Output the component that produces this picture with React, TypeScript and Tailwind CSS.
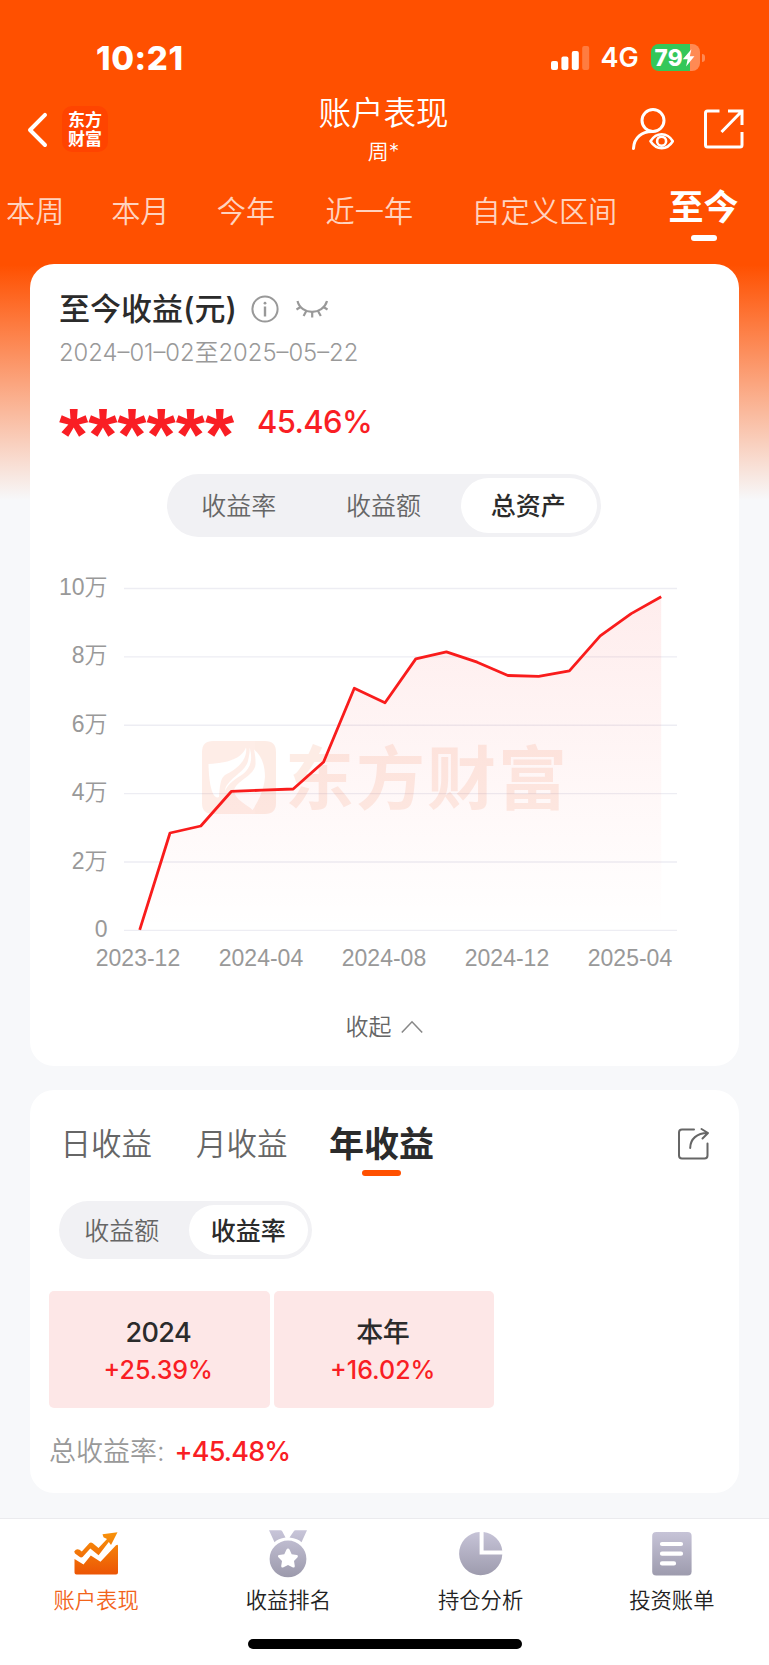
import clsx from "clsx";

const ranges = [
  { label: "本周", className: "ml-[6px]" },
  { label: "本月", className: "ml-[46.8px]" },
  { label: "今年", className: "ml-[47.3px]" },
  { label: "近一年", className: "ml-[50.3px]" },
  { label: "自定义区间", className: "ml-[58.3px]" },
];

const points = [
  [139.7, 929.8], [170, 833], [200.8, 826], [231.5, 791.3], [262.3, 790.2], [293.2, 789],
  [323.6, 762], [354.3, 688.3], [385, 702.7], [415.8, 658.9], [446.4, 651.9], [477.2, 662.2],
  [507.9, 675.5], [538.7, 676.3], [569.4, 670.8], [600.2, 635.8], [631.2, 613.6], [661.2, 596.7],
];

const gridLines = [588.5, 656.9, 725.3, 793.6, 862, 930.4];
const yLabels = ["10万", "8万", "6万", "4万", "2万", "0"];
const xLabels = ["2023-12", "2024-04", "2024-08", "2024-12", "2025-04"];

function StatusBar() {
  return (
    <div className="flex h-[85px] items-center pt-[30px] pl-[96px]">
      <p className="w-[455px] text-[33px] leading-10 font-extrabold tracking-[0.6px]">10:21</p>
      <svg width="39" height="26" viewBox="0 0 39 26" fill="#fff">
        <rect x="0" y="16" width="7" height="9" rx="2" />
        <rect x="10.4" y="11.5" width="7" height="13.5" rx="2" />
        <rect x="20.8" y="6" width="7" height="19" rx="2" />
        <rect x="31.2" y="1" width="7" height="24" rx="2" opacity="0.25" />
      </svg>
      <p className="ml-[10.5px] w-[50px] text-[27px] leading-8 font-semibold">4G</p>
      <div className="flex items-center">
        <div className="flex h-[27px] w-[49px] items-center rounded-[8px] bg-linear-to-r from-[#34c759] from-[79%] to-[#ff8a54] to-[79%] pl-[4px]">
          <span className="text-[22.5px] leading-6 font-extrabold tracking-[0.3px]">79</span>
          <svg className="-ml-px" width="13" height="18" viewBox="0 0 13 18" fill="#fff">
            <path d="M9.4 0.3L0.8 10.2h4.8L4.1 17.6L12.4 7.2H7.8z" />
          </svg>
        </div>
        <div className="ml-[2px] h-[8px] w-[3px] rounded-r-full bg-[#ff8a54]"></div>
      </div>
    </div>
  );
}

function TitleBar() {
  return (
    <div className="flex h-[90px] justify-between">
      <div className="flex w-[160px] pt-[21px] pl-[26px]">
        <svg className="mt-[5px]" width="24" height="40" viewBox="0 0 24 40" fill="none" stroke="#fff" strokeWidth="4" strokeLinecap="round" strokeLinejoin="round">
          <path d="M19 3.8L4 19L19 34" />
        </svg>
        <div className="ml-[12px] flex h-[46px] w-[46px] flex-col items-center justify-center rounded-[10px] bg-[#ff4400] pt-px text-[17px] leading-[19px] font-bold">
          <span>东方</span>
          <span>财富</span>
        </div>
      </div>
      <div className="flex flex-col items-center pt-[9px] pr-[2px] font-[350]">
        <h1 className="text-[32.5px] leading-[40px]">账户表现</h1>
        <p className="text-[21px] leading-[36px]">周*</p>
      </div>
      <div className="flex w-[160px] justify-end gap-[29px] pt-[22px] pr-[25px]">
        <svg width="44" height="44" viewBox="0 0 44 44" fill="none" stroke="#fff" strokeWidth="3" strokeLinecap="round">
          <circle cx="23" cy="13.5" r="11" />
          <path d="M3.5 41.5C4 30 12 24.8 22 24.6" />
          <path d="M20.5 34.2C26.5 25 37 25 42.8 34.2C37 43.4 26.5 43.4 20.5 34.2Z" strokeWidth="2.6" strokeLinejoin="round" />
          <circle cx="31.6" cy="34.2" r="4.5" strokeWidth="2.6" />
        </svg>
        <svg width="41" height="42" viewBox="0 0 41 42" fill="none" stroke="#fff" strokeWidth="3">
          <path d="M16.5 4H4.5Q2.5 4 2.5 6V38Q2.5 40 4.5 40H37Q39 40 39 38V25" />
          <path d="M25 4H39V18M39 4L18.5 25" />
        </svg>
      </div>
    </div>
  );
}

function RangeTabs() {
  return (
    <div className="flex h-[89px] pt-[16px] text-[29.2px] leading-[42px] font-[350] whitespace-nowrap text-[#ffd3bf]">
      {ranges.map(({ label, className }) => (
        <p key={label} className={clsx(className, "shrink-0")}>{label}</p>
      ))}
      <div className="ml-[51.2px] flex shrink-0 flex-col items-center text-white">
        <p className="-mt-[5px] text-[35px] leading-[42px] font-bold">至今</p>
        <div className="mt-[7px] h-[6px] w-[26px] rounded-full bg-white"></div>
      </div>
    </div>
  );
}

function Segmented({ items, active, className, itemClass }: { items: string[]; active: string; className: string; itemClass: string }) {
  return (
    <div className={clsx("flex rounded-full bg-[#f1f1f4] py-[4px] text-[25px] text-[#666]", className)}>
      {items.map((item) => (
        <div key={item} className="flex flex-1 justify-center">
          <p className={clsx("flex items-center justify-center rounded-full pt-[3px] pr-px", itemClass, item === active ? "bg-white font-medium text-[#2b2b2b]" : "font-[350]")}>{item}</p>
        </div>
      ))}
    </div>
  );
}

function AssetChart() {
  const line = points.map(([x, y]) => `${x - 124},${y - 580}`).join(" ");

  return (
    <div className="mt-[43px] flex flex-col font-['Liberation_Sans','Noto_Sans_CJK_SC',sans-serif] text-[23px] text-[#999]">
      <div className="flex">
        <div className="-mt-[7.5px] flex w-[78px] flex-col text-right font-[350]">
          {yLabels.map((label) => (
            <p key={label} className="h-[68.4px] leading-[30px]">{label}</p>
          ))}
        </div>
        <svg className="ml-[16.5px]" width="556" height="360" viewBox="0 0 556 360">
          <defs>
            <linearGradient id="area" x1="0" y1="0" x2="0" y2="1">
              <stop offset="0" stopColor="#f91c1c" stopOpacity="0.08" />
              <stop offset="1" stopColor="#f91c1c" stopOpacity="0" />
            </linearGradient>
          </defs>
          {gridLines.map((y) => (
            <path key={y} d={`M0 ${y - 580}H553`} stroke="#ededf3" strokeWidth="1.4" />
          ))}
          <g fill="#f25c22" opacity="0.11">
            <path
              fillRule="evenodd"
              d="M89 161h52q11 0 11 11v51q0 11 -11 11h-52q-11 0 -11 -11v-51q0 -11 11 -11z M84.5 184C101 183 117 180 122 167.5C124 180 112 190 101 195C96 199 96 206 95 217C89 220 85 206 84.5 184z M125.5 167.5C129 178 127 188 119 194C111 199 104 204 101 211C102 199 121 193 124 181C125 176 126 172 125.5 167.5z M130 169.5C138 176 141 186 141 197C140 210 134 222 128.5 230C124 225 111 220 110 211C111 201 131 196 131.5 184C131.5 178 131 174 130 169.5z"
            />
            <text x="161" y="224" fontSize="69" fontWeight="700" letterSpacing="2" fontFamily="Noto Sans CJK SC">东方财富</text>
          </g>
          <polygon points={`${line} 537.2,350.4 15.7,350.4`} fill="url(#area)" />
          <polyline points={line} fill="none" stroke="#f91c1c" strokeWidth="2.8" strokeLinejoin="round" />
        </svg>
      </div>
      <div className="-mt-[39.4px] ml-[47px] flex">
        {xLabels.map((label) => (
          <p key={label} className="w-[123px] text-center leading-[30px]">{label}</p>
        ))}
      </div>
    </div>
  );
}

function ProfitCard() {
  return (
    <section className="mr-[30.5px] ml-[29.5px] h-[802px] rounded-[24px] bg-white pt-[25px]">
      <div className="flex items-center pl-[29.5px]">
        <h2 className="w-[192px] text-[31px] leading-[40px] font-medium whitespace-nowrap text-[#2b2b2b]">至今收益(元)</h2>
        <svg width="28" height="28" viewBox="0 0 28 28" fill="none" stroke="#999" strokeWidth="2">
          <circle cx="14" cy="14" r="12.6" />
          <path d="M14 11.5V21.5" strokeWidth="2.4" />
          <circle cx="14" cy="8.2" r="1.4" fill="#999" stroke="none" />
        </svg>
        <svg className="ml-[17px]" width="32" height="20" viewBox="0 0 32 20" fill="none" stroke="#999" strokeWidth="2.2">
          <path d="M1.5 2C5 16.5 27 16.5 31 2" />
          <path d="M4.5 8L0.5 10.5M10.3 12L7.6 17M16.2 13V18.5M22 12L24.8 17M27.5 8L31.5 10.5" />
        </svg>
      </div>
      <p className="mt-[8.5px] pl-[29.5px] text-[23.8px] leading-[30px] font-[350] text-[#999]">2024–01–02至2025–05–22</p>
      <div className="mt-[26.5px] flex h-[68.5px] pl-[29.5px] text-[#f91e24]">
        <p className="w-[198px] font-['Liberation_Sans',sans-serif] text-[75px] leading-[80px] font-bold">******</p>
        <p className="text-[31px] leading-[55px] font-medium tracking-[-0.6px]">45.46%</p>
      </div>
      <Segmented items={["收益率", "收益额", "总资产"]} active="总资产" className="mx-auto mt-[11px] h-[63px] w-[434px]" itemClass="w-[136px]" />
      <AssetChart />
      <div className="mt-[39px] flex items-center justify-center gap-[9px] text-[#666]">
        <p className="text-[23px] leading-[30px] font-[350]">收起</p>
        <svg width="22" height="14" viewBox="0 0 22 14" fill="none" stroke="#888" strokeWidth="1.6">
          <path d="M0.8 12.5L11 1.8L21.2 12.5" />
        </svg>
      </div>
    </section>
  );
}

function YearCell({ title, value }: { title: string; value: string }) {
  return (
    <div className="flex h-[117px] w-[220.5px] flex-col items-center rounded-[5px] bg-[#fde7e7] pt-[22.5px] pr-[2px] font-medium">
      <p className="text-[27px] leading-[37px] tracking-[-0.6px] text-[#2b2b2b]">{title}</p>
      <p className="text-[25px] leading-[38px] text-[#f91e24]">{value}</p>
    </div>
  );
}

function HistoryCard() {
  return (
    <section className="mt-[23.5px] mr-[30.5px] ml-[29.5px] h-[403.5px] rounded-[24px] bg-white pt-[33px]">
      <div className="flex h-[78.5px] pl-[31px] text-[30.5px] leading-[41px] font-[350] text-[#666]">
        <p className="w-[135.5px]">日收益</p>
        <p className="w-[133px]">月收益</p>
        <div className="flex flex-col items-center">
          <p className="text-[35px] leading-[42px] font-bold text-[#2b2b2b]">年收益</p>
          <div className="mt-[5.5px] h-[6px] w-[39px] rounded-full bg-[#ff5000]"></div>
        </div>
        <svg className="mt-[4px] ml-[243px]" width="34" height="34" viewBox="0 0 34 34" fill="none" stroke="#666" strokeWidth="2" strokeLinecap="round" strokeLinejoin="round">
          <path d="M17 2.6H5Q2 2.6 2 5.6V28.5Q2 31.5 5 31.5H27.5Q30.5 31.5 30.5 28.5V16.5" />
          <path d="M13.2 21C13.2 12 20 6 30.5 6M24.5 2L31 6L25.5 11.5" />
        </svg>
      </div>
      <Segmented items={["收益额", "收益率"]} active="收益率" className="ml-[29.5px] h-[58px] w-[253px]" itemClass="w-[119px]" />
      <div className="mt-[32px] flex gap-[4px] pl-[19.5px]">
        <YearCell title="2024" value="+25.39%" />
        <YearCell title="本年" value="+16.02%" />
      </div>
      <div className="mt-[24px] flex pl-[19.5px] text-[27px] leading-[40px]">
        <p className="w-[125.5px] font-[350] text-[#999]">总收益率:</p>
        <p className="font-medium tracking-[-0.8px] text-[#f91e24]">+45.48%</p>
      </div>
    </section>
  );
}

function BottomNav() {
  return (
    <nav className="mt-[25px] flex h-[147px] flex-col items-center border-t border-[#ebebee] bg-white">
      <svg width="0" height="0" className="absolute">
        <defs>
          <linearGradient id="orange" x1="0" y1="0" x2="0" y2="1">
            <stop offset="0" stopColor="#f8930b" />
            <stop offset="1" stopColor="#ec5505" />
          </linearGradient>
          <linearGradient id="grey" gradientUnits="userSpaceOnUse" x1="0" y1="0" x2="0" y2="48">
            <stop offset="0" stopColor="#c8c5d9" />
            <stop offset="1" stopColor="#9b99ab" />
          </linearGradient>
        </defs>
      </svg>
      <div className="grid w-full grid-cols-4 pt-[11px] text-[21.3px] leading-[30px] font-[350] text-[#222]">
        <div className="flex flex-col items-center text-[#f2641a]">
          <svg width="46" height="48" viewBox="0 0 46 48" fill="url(#orange)">
            <path d="M1.2 21.5Q3.5 18 6.5 19.8L8.8 21.5L16.5 13Q18 12 19.8 13.3L25.5 18L34 9L30.5 7.2L29.5 4.2L44.5 2.2L38 15L35.8 12L25.6 25.3L17.3 18.5L9.6 27Q8 28 6.5 26.8L2 23.6z M1.5 29L10.5 34.5L17.8 25.5L27.5 31.7L43 15.2Q45 14 45 16V42.5Q45 44.5 43 44.5H3.5Q1.5 44.5 1.5 42.5z" />
          </svg>
          <p className="mt-[7px]">账户表现</p>
        </div>
        <div className="flex flex-col items-center">
          <svg width="46" height="48" viewBox="0 0 46 48" fill="url(#grey)">
            <path d="M4 0.3H15.5Q16.6 0.3 17.2 1.3L20.5 7.5Q13 8.5 9.5 12.3z M42 0.3H30.5Q29.4 0.3 28.8 1.3L24.5 7.5Q33 8.5 36.5 12.3z" />
            <path fillRule="evenodd" d="M23 10.5a18.4 18.4 0 1 1 0 36.8a18.4 18.4 0 1 1 0 -36.8z M23 18.5Q22 18.5 21.5 19.6L19.3 24.2L14.2 25Q12.2 25.6 13.4 27.3L17 31L16.2 36Q16.2 38 18 37.4L23 35L28 37.4Q29.8 38 29.8 36L29 31L32.6 27.3Q33.8 25.6 31.8 25L26.7 24.2L24.5 19.6Q24 18.5 23 18.5z" />
          </svg>
          <p className="mt-[7px]">收益排名</p>
        </div>
        <div className="flex flex-col items-center">
          <svg width="46" height="48" viewBox="0 0 46 48" fill="url(#grey)">
            <path d="M21.6 2V24.6H44.3A21.6 21.6 0 1 1 21.6 2z M25.6 2A21.6 21.6 0 0 1 44.3 20.6H25.6z" />
          </svg>
          <p className="mt-[7px]">持仓分析</p>
        </div>
        <div className="flex flex-col items-center pr-[2px]">
          <svg width="46" height="48" viewBox="0 0 46 48">
            <rect x="3.2" y="2" width="39.4" height="43.4" rx="4" fill="url(#grey)" />
            <path d="M13 14H32M13 23.7H32M13 33.4H25" stroke="#fff" strokeWidth="4.2" strokeLinecap="round" />
          </svg>
          <p className="mt-[7px]">投资账单</p>
        </div>
      </div>
      <div className="mt-[23.5px] h-[10px] w-[274px] rounded-full bg-black"></div>
    </nav>
  );
}

export default function App() {
  return (
    <main className="h-[1665px] w-[769px] overflow-hidden bg-[#f7f8fa] bg-[linear-gradient(to_bottom,#ff5000_265px,#f7f8fa_500px)] font-['Inter','Noto_Sans_CJK_SC',sans-serif]">
      <header className="text-white">
        <StatusBar />
        <TitleBar />
        <RangeTabs />
      </header>
      <ProfitCard />
      <HistoryCard />
      <BottomNav />
    </main>
  );
}
